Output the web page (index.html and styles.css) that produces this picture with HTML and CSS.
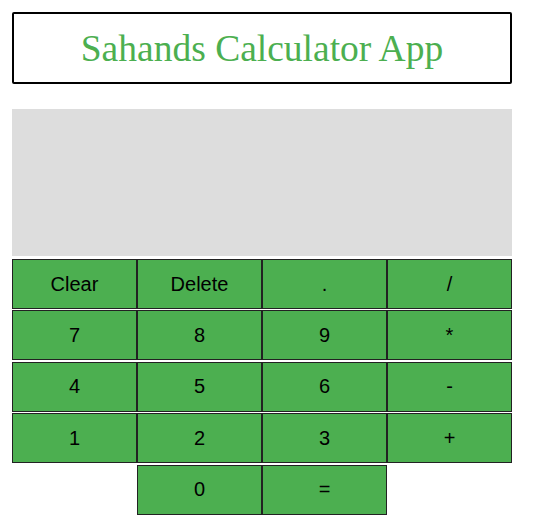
FILE: index.html
```html
<!DOCTYPE html>
<html>
<head>
<meta charset="utf-8">
<link rel="stylesheet" href="styles.css">
</head>
<body>
<div class="app">
  <div class="header"><h1 class="title">Sahands Calculator App</h1></div>
  <div class="display"></div>
  <div class="keys">
    <button class="key">Clear</button>
    <button class="key">Delete</button>
    <button class="key">.</button>
    <button class="key">/</button>
    <button class="key">7</button>
    <button class="key">8</button>
    <button class="key">9</button>
    <button class="key">*</button>
    <button class="key">4</button>
    <button class="key">5</button>
    <button class="key">6</button>
    <button class="key">-</button>
    <button class="key">1</button>
    <button class="key">2</button>
    <button class="key">3</button>
    <button class="key">+</button>
    <button class="key zero">0</button>
    <button class="key">=</button>
  </div>
</div>
</body>
</html>
```
FILE: styles.css
```css
html, body {
  margin: 0;
  padding: 0;
  background: #ffffff;
}
.app {
  width: 500px;
  padding: 12px;
}
.header {
  box-sizing: border-box;
  height: 72px;
  border: 2px solid #000;
  border-radius: 2px;
  display: flex;
  align-items: center;
  justify-content: center;
}
.title {
  margin: 0;
  font-family: "Liberation Serif", "Times New Roman", serif;
  font-weight: normal;
  font-size: 37.5px;
  line-height: 44px;
  color: #4caf50;
  padding-top: 2px;
}
.display {
  margin-top: 25px;
  height: 147px;
  background: #dddddd;
}
.keys {
  margin-top: 3px;
  display: grid;
  grid-template-columns: repeat(4, 125px);
  grid-auto-rows: 50px;
  row-gap: 1.4px;
}
.key {
  box-sizing: border-box;
  margin: 0;
  padding: 0;
  height: 50px;
  border: 1px solid #222;
  background: #4caf50;
  color: #000;
  font-family: "Liberation Sans", Arial, sans-serif;
  font-size: 20px;
  border-radius: 0;
}
.zero {
  grid-column: 2;
}
```
